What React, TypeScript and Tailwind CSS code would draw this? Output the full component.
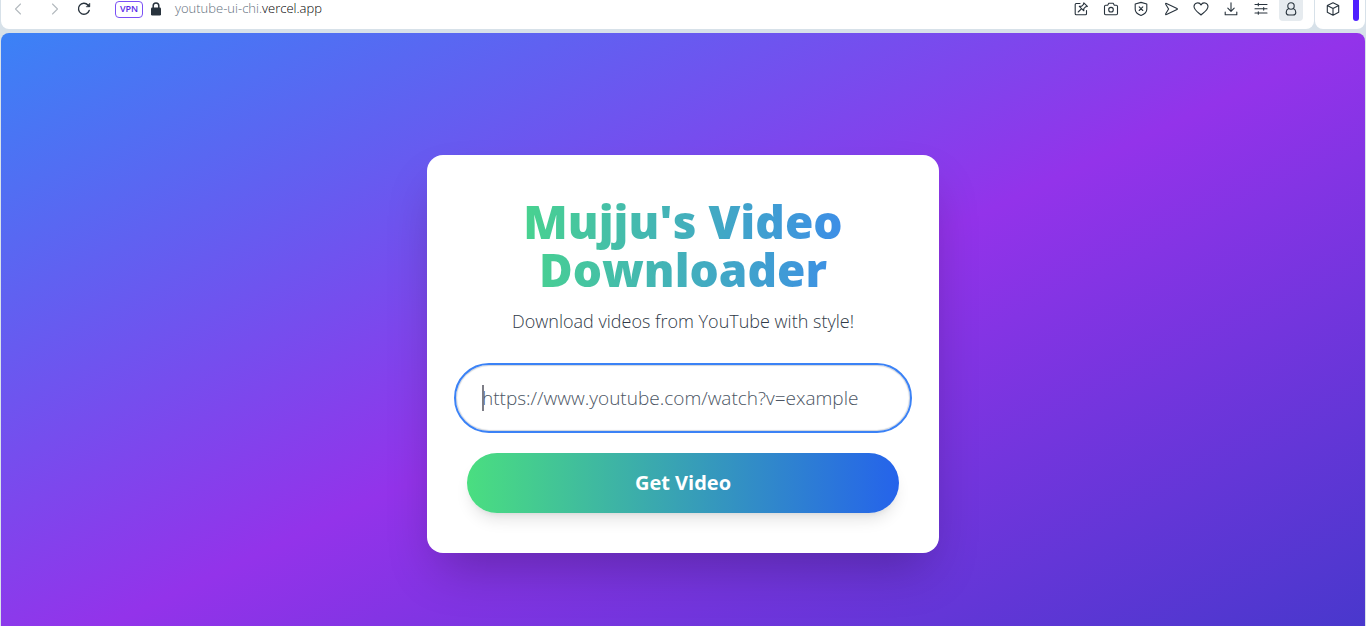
import type { ReactNode } from "react";

function Icon({ children, className = "" }: { children: ReactNode; className?: string }) {
  return (
    <svg
      viewBox="0 0 16 16"
      aria-hidden="true"
      className={`size-4 fill-none stroke-current ${className}`}
      strokeWidth="1.1"
      strokeLinecap="round"
      strokeLinejoin="round"
    >
      {children}
    </svg>
  );
}

function BarButton({ label, active = false, children }: { label: string; active?: boolean; children: ReactNode }) {
  return (
    <button
      type="button"
      aria-label={label}
      className={`flex size-6 shrink-0 items-center justify-center rounded text-[#28333d] ${active ? "bg-[#e6ebef]" : ""}`}
    >
      {children}
    </button>
  );
}

function BrowserBar() {
  return (
    <header className="flex h-[29px] shrink-0 gap-px px-px">
      <div className="flex min-w-0 flex-1 items-start justify-between rounded-b-lg bg-white pr-[11px] pl-[5px]">
        <div className="-mt-[3px] flex h-6 items-center">
          <button type="button" aria-label="Back" className="flex size-6 items-center justify-center text-[#b4babf]">
            <Icon><path d="M10.500 3 5.500 8l5 5" /></Icon>
          </button>
          <button type="button" aria-label="Forward" className="ml-3 flex size-6 items-center justify-center text-[#b4babf]">
            <Icon><path d="m6.500 3 5 5-5 5" /></Icon>
          </button>
          <button type="button" aria-label="Reload" className="ml-[6px] flex size-6 items-center justify-center text-[#28333d]">
            <Icon>
              <path d="M13.200 9.500a5.500 5.500 0 1 1-1.200-5.500l1.200 1.300" strokeWidth="1.400" />
              <path d="M13.800 2.500v3.300h-3.300z" className="fill-current" strokeWidth="0.600" />
            </Icon>
          </button>
          <span className="ml-[19px] flex h-[17px] w-[28px] items-center justify-center rounded border border-[#7a50f5] text-[9px] font-semibold text-[#5b2be8]">
            VPN
          </span>
          <svg viewBox="0 0 12 14" aria-hidden="true" className="ml-[7px] h-[14px] w-3 text-[#28333d]">
            <rect x="1" y="5.500" width="10" height="8" rx="1.200" className="fill-current" />
            <path d="M3.200 6V3.800a2.800 2.800 0 0 1 5.600 0V6" className="fill-none stroke-current" strokeWidth="1.500" />
          </svg>
          <span className="ml-[13px] text-[13px] font-light whitespace-nowrap text-[#5f6f7c]">
            youtube-ui-chi.<span className="text-black">vercel.app</span>
          </span>
        </div>
        <div className="-mt-[3px] flex items-center gap-[6px]">
          <BarButton label="Edit page">
            <Icon>
              <path d="M7 2.500H3.200q-1 0-1 1v9.300q0 1 1 1h9.300q1 0 1-1V9.500" />
              <path d="m10.800 1.800 3.600 3.600-1.600.3-2 2 0 2.100-4.500-4.500 2.200 0 2-2zM8.400 7.800 5.200 11" />
            </Icon>
          </BarButton>
          <BarButton label="Snapshot">
            <Icon>
              <path d="M1.500 5.500q0-1.200 1.200-1.200h2l1.100-2h4.400l1.100 2h2q1.200 0 1.200 1.200v7q0 1.200-1.200 1.200H2.700q-1.200 0-1.200-1.200z" />
              <circle cx="8" cy="8.700" r="2.300" />
            </Icon>
          </BarButton>
          <BarButton label="Ad blocker">
            <Icon>
              <path d="M8 1.400 13.800 3v5.200c0 3-2.800 5.100-5.800 6.300-3-1.200-5.800-3.300-5.800-6.300V3z" />
              <path d="m6.200 5.900 3.600 3.600m0-3.600L6.200 9.500" />
            </Icon>
          </BarButton>
          <BarButton label="Send">
            <Icon><path d="M2.700 3.200q-.4-1.200.8-.8l10.500 5q.8.600 0 1.200l-10.500 5q-1.200.4-.8-.8L5.600 8z" /></Icon>
          </BarButton>
          <BarButton label="Favourite">
            <Icon><path d="M8 14C4.500 11 1 8.800 1 5.500A3.700 3.700 0 0 1 8 3.900a3.700 3.700 0 0 1 7 1.600C15 8.800 11.500 11 8 14z" /></Icon>
          </BarButton>
          <BarButton label="Downloads">
            <Icon><path d="M8 1.800v8.400M4.800 7.200 8 10.400l3.200-3.200M2.200 11v2.800h11.600V11" /></Icon>
          </BarButton>
          <BarButton label="Settings">
            <Icon>
              <path d="M2 3.500h12M2 7.800h12M2 12h12M5.300 2.200v2.600M10.700 6.500v2.600M5.300 10.700v2.600" />
            </Icon>
          </BarButton>
          <BarButton label="Profile" active>
            <Icon>
              <circle cx="8" cy="5" r="3.200" />
              <path d="M5.700 7.500C4 8.300 3.200 9.700 3.200 11.200c0 1.800 1 2.800 2.800 2.800h4c1.800 0 2.800-1 2.800-2.800 0-1.500-.8-2.900-2.500-3.700" />
            </Icon>
          </BarButton>
        </div>
      </div>
      <div className="flex w-[50px] shrink-0 items-start justify-between rounded-b-lg bg-white px-[6px]">
        <div className="-mt-[3px]">
          <BarButton label="Extensions">
            <Icon><path d="m8 1.700 5.700 2.800v6.800L8 14.200l-5.700-2.900V4.500zM2.300 4.500 8 7.400l5.700-2.900M8 7.400v6.800" /></Icon>
          </BarButton>
        </div>
        <span className="h-[21px] w-[6px] rounded-b-full bg-[#4f1fff]" />
      </div>
    </header>
  );
}

export default function App() {
  return (
    <div className="flex h-screen flex-col gap-1 overflow-hidden bg-[#d7e1e9] font-['Open_Sans','Noto_Sans',sans-serif]">
      <BrowserBar />
      <main className="mx-px flex min-h-[642px] shrink-0 items-center justify-center rounded-t-lg bg-linear-to-br/srgb from-[#3b82f6] via-[#9333ea] to-[#4338ca]">
        <section className="w-full max-w-lg rounded-2xl bg-white px-10 pt-[42px] pb-10 shadow-2xl">
          <h1 className="bg-linear-to-r/srgb from-[#4ade80] to-[#3b82f6] bg-clip-text text-center text-[46px] leading-[48px] font-extrabold text-transparent">
            Mujju&#39;s Video Downloader
          </h1>
          <p className="mt-[14px] text-center text-lg leading-7 font-light text-[#303a48]">Download videos from YouTube with style!</p>
          <form className="mt-7" onSubmit={(event) => event.preventDefault()}>
            <div className="relative -mx-[13px] flex items-center">
              <input
                type="url"
                autoFocus
                aria-label="Video URL"
                placeholder="https://www.youtube.com/watch?v=example"
                className="peer block h-[70px] w-full rounded-full border-2 border-[#3b82f6] bg-white px-[26px] text-[19px] font-light text-[#1f2937] caret-transparent shadow-[inset_0_0_1px_1px_#d1d5db] outline-none placeholder:text-[#4b5563]"
              />
              <span className="pointer-events-none absolute left-7 hidden h-[26px] w-[2px] bg-[#7d7d86] peer-placeholder-shown:block" />
            </div>
            <button
              type="submit"
              className="mt-5 block h-[60px] w-full rounded-full bg-linear-to-r/srgb from-[#4ade80] to-[#2563eb] text-xl font-bold text-white shadow-lg"
            >
              Get Video
            </button>
          </form>
        </section>
      </main>
    </div>
  );
}
